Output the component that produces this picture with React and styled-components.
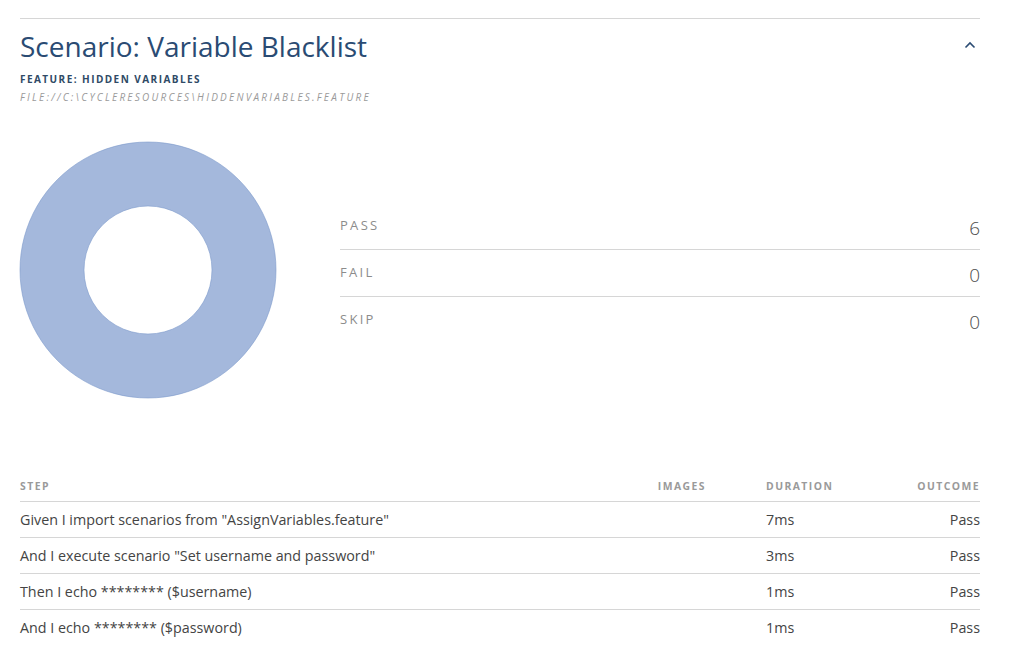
import React from 'react';
import styled, { createGlobalStyle } from 'styled-components';

const GlobalStyle = createGlobalStyle`
  body {
    margin: 0;
    background: #fff;
    font-family: "Open Sans", "Liberation Sans", sans-serif;
  }
`;

const steps = [
  { text: 'Given I import scenarios from "AssignVariables.feature"', duration: '7ms', outcome: 'Pass' },
  { text: 'And I execute scenario "Set username and password"', duration: '3ms', outcome: 'Pass' },
  { text: 'Then I echo ******** ($username)', duration: '1ms', outcome: 'Pass' },
  { text: 'And I echo ******** ($password)', duration: '1ms', outcome: 'Pass' },
];

const totals = [
  { label: 'Pass', value: 6 },
  { label: 'Fail', value: 0 },
  { label: 'Skip', value: 0 },
];

const Donut = () => (
  <svg width="258" height="258" viewBox="0 0 258 258">
    <path
      d="M129 1 a128 128 0 1 0 0.001 0 Z M129 65 a64 64 0 1 1 -0.001 0 Z"
      fill="#a4b8dc"
      fillRule="evenodd"
      stroke="#7d9bcb"
      strokeWidth="0.6"
    />
  </svg>
);

const App = () => {
  return (
    <>
      <GlobalStyle />
      <S_Scenario>
        <S_Header>
          <h1>Scenario: Variable Blacklist</h1>
          <S_Toggle>
            <svg width="12" height="8" viewBox="0 0 12 8">
              <path d="M1.5 6.5 L6 2 L10.5 6.5" fill="none" stroke="#2a4b73" strokeWidth="1.6" />
            </svg>
          </S_Toggle>
        </S_Header>
        <S_Feature>Feature: Hidden Variables</S_Feature>
        <S_File>file://C:\CycleResources\HiddenVariables.feature</S_File>

        <S_Summary>
          <Donut />
          <S_Totals>
            {totals.map((t) => (
              <S_Total key={t.label}>
                <span className="label">{t.label}</span>
                <span className="value">{t.value}</span>
              </S_Total>
            ))}
          </S_Totals>
        </S_Summary>

        <S_Table>
          <S_Row $head>
            <div>Step</div>
            <div className="right">Images</div>
            <div className="pad">Duration</div>
            <div className="right">Outcome</div>
          </S_Row>
          {steps.map((s, i) => (
            <S_Row key={i}>
              <div>{s.text}</div>
              <div className="right"></div>
              <div className="pad">{s.duration}</div>
              <div className="right">{s.outcome}</div>
            </S_Row>
          ))}
        </S_Table>
      </S_Scenario>
    </>
  );
};

const S_Scenario = styled.section`
  width: 960px;
  margin: 18px 0 0 20px;
  border-top: 1px solid #d6d6d6;
`;

const S_Header = styled.div`
  display: flex;
  justify-content: space-between;
  align-items: center;
  padding-top: 8px;
  h1 {
    margin: 0;
    font-size: 28px;
    font-weight: 400;
    line-height: 38px;
    color: #2a4b73;
  }
`;

const S_Toggle = styled.div`
  display: flex;
  padding-right: 4px;
  margin-top: -2px;
`;

const S_Feature = styled.div`
  margin-top: 7px;
  font-size: 10px;
  font-weight: 700;
  letter-spacing: 1.45px;
  text-transform: uppercase;
  color: #2f4a66;
  line-height: 14px;
`;

const S_File = styled.div`
  margin-top: 4px;
  font-size: 10px;
  font-style: italic;
  letter-spacing: 2.25px;
  text-transform: uppercase;
  color: #9a9a9a;
  line-height: 14px;
`;

const S_Summary = styled.div`
  display: flex;
  align-items: center;
  gap: 63px;
  margin-top: 37px;
  margin-left: -1px;
  svg {
    flex-shrink: 0;
  }
`;

const S_Totals = styled.div`
  flex: 1;
  padding-top: 6px;
`;

const S_Total = styled.div`
  display: flex;
  justify-content: space-between;
  align-items: center;
  height: 46px;
  border-bottom: 1px solid #d6d6d6;
  &:last-child {
    border-bottom: none;
  }
  .label {
    font-size: 13px;
    letter-spacing: 2.3px;
    text-transform: uppercase;
    color: #8c8c8c;
    margin-top: -2px;
  }
  .value {
    font-size: 19px;
    font-weight: 300;
    color: #4d4d4d;
    padding-top: 4px;
  }
`;

const S_Table = styled.div`
  margin-top: 72px;
`;

const S_Row = styled.div`
  display: grid;
  grid-template-columns: 1fr 100px 174px 100px;
  align-items: center;
  height: ${(p) => (p.$head ? '30px' : '35px')};
  border-bottom: 1px solid #d6d6d6;
  font-size: ${(p) => (p.$head ? '10.4px' : '14.3px')};
  font-weight: ${(p) => (p.$head ? 700 : 400)};
  letter-spacing: ${(p) => (p.$head ? '1.45px' : 'normal')};
  text-transform: ${(p) => (p.$head ? 'uppercase' : 'none')};
  color: ${(p) => (p.$head ? '#9a9a9a' : '#444')};
  &:last-child {
    border-bottom: none;
  }
  .right {
    text-align: right;
  }
  .pad {
    padding-left: 60px;
  }
`;

export default App;
